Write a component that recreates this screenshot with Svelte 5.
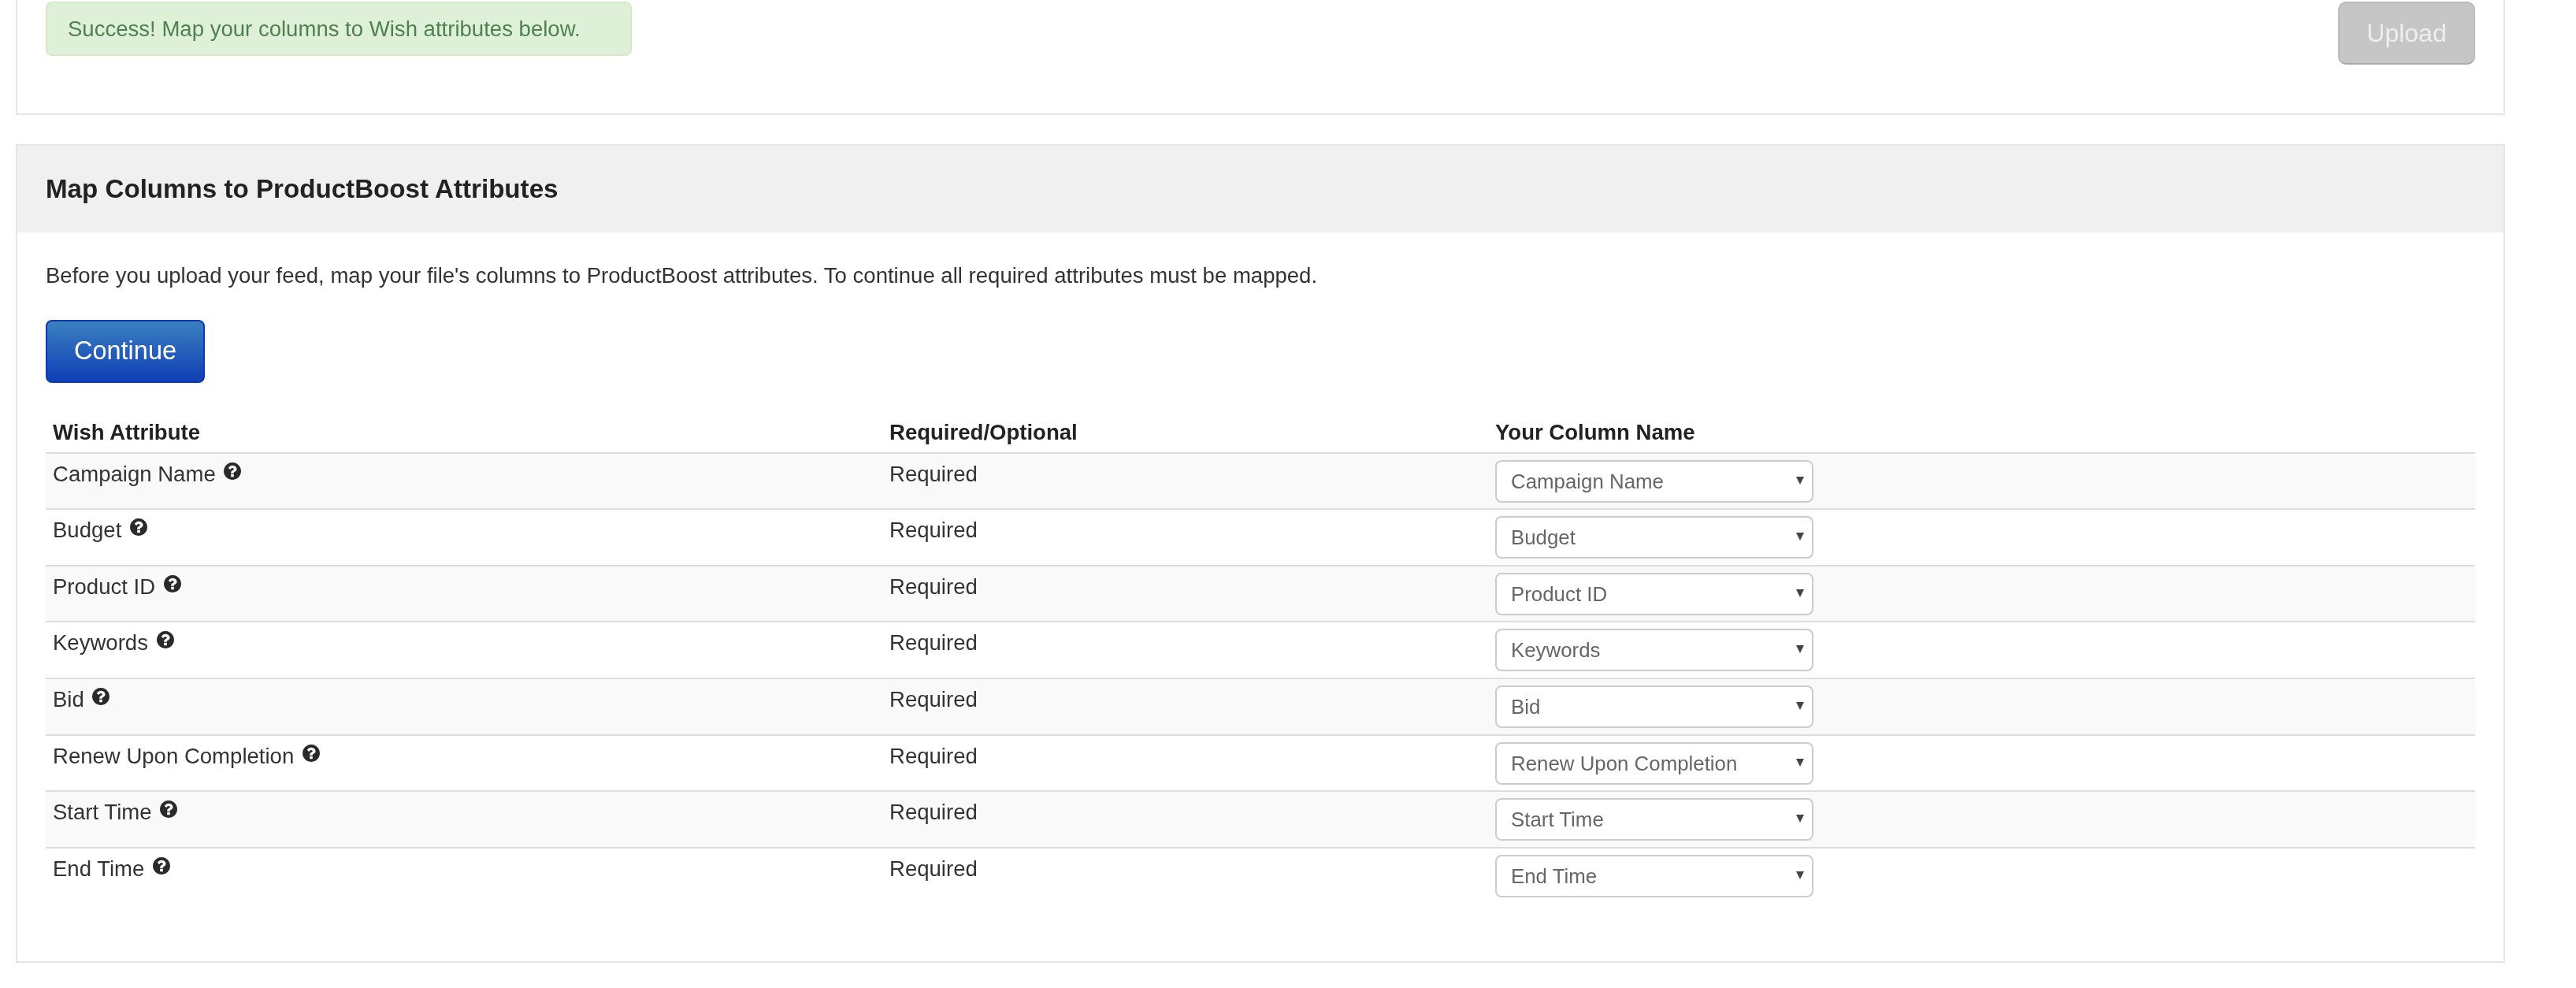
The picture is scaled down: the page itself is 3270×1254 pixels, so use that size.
<script>
  const rows = ['Campaign Name', 'Budget', 'Product ID', 'Keywords', 'Bid', 'Renew Upon Completion', 'Start Time', 'End Time'];
</script>

<div class="page">
  <section class="card upload">
    <div class="alert">Success! Map your columns to Wish attributes below.</div>
    <button class="btn-upload" disabled>Upload</button>
  </section>

  <section class="card map">
    <h2>Map Columns to ProductBoost Attributes</h2>
    <div class="body">
      <p>Before you upload your feed, map your file's columns to ProductBoost attributes. To continue all required attributes must be mapped.</p>
      <button class="btn-continue">Continue</button>
      <table>
        <thead>
          <tr>
            <th class="c1">Wish Attribute</th>
            <th class="c2">Required/Optional</th>
            <th>Your Column Name</th>
          </tr>
        </thead>
        <tbody>
          {#each rows as row}
            <tr>
              <td>
                {row}
                <svg class="help" viewBox="128 128 1536 1536" aria-hidden="true"><path d="M1024 1376v-192q0-14-9-23t-23-9h-192q-14 0-23 9t-9 23v192q0 14 9 23t23 9h192q14 0 23-9t9-23zm256-672q0-88-55.5-163t-138.5-116-170-41q-243 0-371 213-15 24 8 42l132 100q7 6 19 6 16 0 25-12 53-68 86-92 34-24 86-24 48 0 85.5 26t37.5 59q0 38-20 61t-68 45q-63 28-115.5 86.5t-52.5 125.5v36q0 14 9 23t23 9h192q14 0 23-9t9-23q0-19 21.5-49.5t54.5-49.5q32-18 49-28.5t46-35 44.5-48 28-60.5 12.5-81zm384 192q0 209-103 385.5t-279.5 279.5-385.5 103-385.5-103-279.5-279.5-103-385.5 103-385.5 279.5-279.5 385.5-103 385.5 103 279.5 279.5 103 385.5z"/></svg>
              </td>
              <td>Required</td>
              <td>
                <div class="select-wrap">
                  <select><option>{row}</option></select>
                </div>
              </td>
            </tr>
          {/each}
        </tbody>
      </table>
    </div>
  </section>
</div>

<style>
  :global(body) {
    margin: 0;
    background: #fff;
    font-family: "Liberation Sans", Arial, sans-serif;
    color: #333;
  }
  .page {
    width: 3160px;
    margin-left: 20px;
    font-size: 27.55px;
    line-height: 37px;
    filter: blur(0.6px);
  }
  .card {
    box-sizing: border-box;
    border: 2px solid #e5e5e5;
  }
  .upload {
    height: 146px;
    border-top: 0;
    padding: 2px 36px 0;
    display: flex;
    justify-content: space-between;
    align-items: flex-start;
  }
  .alert {
    box-sizing: border-box;
    width: 744px;
    height: 69px;
    padding: 0 26px;
    line-height: 66px;
    background: #dff0d8;
    border: 2px solid #d6e9c6;
    border-radius: 8px;
    color: #4f8050;
  }
  .btn-upload {
    box-sizing: border-box;
    width: 174px;
    height: 80px;
    padding: 0;
    font: 32px "Liberation Sans", Arial, sans-serif;
    color: #eee;
    background: #c6c6c6;
    border: 2px solid #bbb;
    border-bottom-color: #aaa;
    border-radius: 10px;
  }
  .map {
    margin-top: 37px;
    height: 1039px;
  }
  h2 {
    margin: 0;
    height: 110px;
    padding: 0 36px;
    line-height: 110px;
    font-size: 33.15px;
    font-weight: 700;
    color: #222;
    background: #f0f0f0;
  }
  .body {
    padding: 36px 36px 0;
  }
  p {
    margin: 0;
    line-height: 37px;
  }
  .btn-continue {
    display: block;
    box-sizing: border-box;
    width: 202px;
    height: 80px;
    margin-top: 37.6px;
    padding: 0;
    font: 32.5px "Liberation Sans", Arial, sans-serif;
    color: #fff;
    background: linear-gradient(#3a80c0, #0f3fb5);
    border: 2px solid #0d3aa8;
    border-radius: 8px;
  }
  table {
    width: 3084px;
    margin-top: 36px;
    border-collapse: collapse;
    table-layout: fixed;
  }
  th {
    padding: 8px 9px 7px;
    text-align: left;
    font-weight: 700;
    color: #222;
  }
  .c1 { width: 1062px; box-sizing: border-box; }
  .c2 { width: 770px; box-sizing: border-box; }
  td {
    height: 71.6px;
    box-sizing: border-box;
    padding: 8px 9px 7.6px;
    line-height: 36px;
    vertical-align: top;
    border-top: 2px solid #ddd;
  }
  td:last-child, th:last-child {
    padding-left: 8px;
  }
  tbody tr:nth-child(odd) td {
    background: #f9f9f9;
  }
  .help {
    width: 22px;
    height: 22px;
    margin-left: 3px;
    fill: #2a2a2a;
    vertical-align: 2px;
  }
  .select-wrap {
    position: relative;
    width: 404px;
  }
  .select-wrap::after {
    content: "";
    position: absolute;
    right: 12px;
    top: 21px;
    border-left: 5.5px solid transparent;
    border-right: 5.5px solid transparent;
    border-top: 10px solid #444;
    pointer-events: none;
  }
  select {
    display: block;
    box-sizing: border-box;
    width: 404px;
    height: 54px;
    padding: 0 18px;
    appearance: none;
    font: 25.85px "Liberation Sans", Arial, sans-serif;
    color: #666;
    background: #fff;
    border: 2px solid #ccc;
    border-radius: 8px;
  }
</style>
